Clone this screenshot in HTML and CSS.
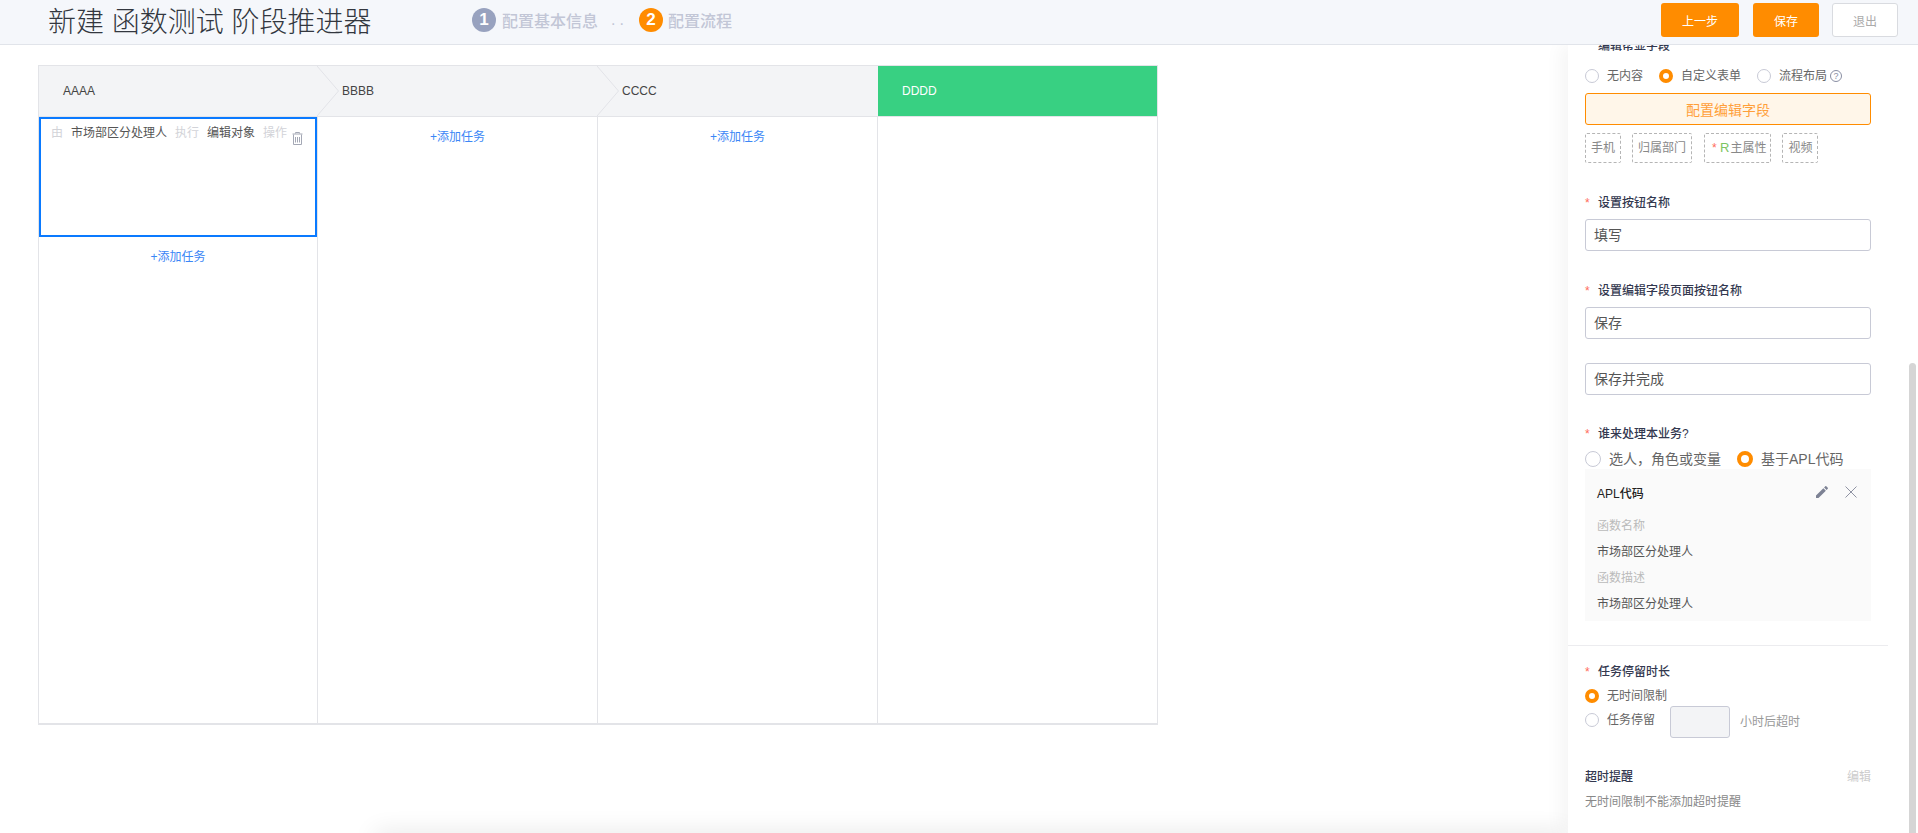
FILE: index.html
```html
<!DOCTYPE html>
<html lang="zh-CN">
<head>
    <meta charset="UTF-8">
    <meta name="viewport" content="width=device-width, initial-scale=1.0">
    <title>新建 函数测试 阶段推进器</title>
    <link rel="stylesheet" href="styles.css">
</head>
<body>
    <header class="topbar">
        <h1 class="page-title">新建 函数测试 阶段推进器</h1>
        <div class="steps">
            <span class="step-num">1</span>
            <span class="step-text">配置基本信息</span>
            <span class="step-dots">..</span>
            <span class="step-num step-num-on">2</span>
            <span class="step-text">配置流程</span>
        </div>
        <div class="top-actions">
            <button class="btn btn-primary btn-prev">上一步</button>
            <button class="btn btn-primary">保存</button>
            <button class="btn btn-plain">退出</button>
        </div>
    </header>

    <main class="workspace">
        <section class="board">
            <div class="column">
                <div class="col-head">
                    AAAA
                    <svg class="chevron" width="23" height="50" viewBox="0 0 23 50"><path d="M0 0 L21.5 25 L0 50" fill="#f3f4f6" stroke="#e2e3e8"/></svg>
                </div>
                <div class="col-body">
                    <div class="task-card">
                        <span class="muted">由</span>
                        <span>市场部区分处理人</span>
                        <span class="muted">执行</span>
                        <span>编辑对象</span>
                        <span class="muted">操作</span>
                        <svg class="trash" width="11" height="13" viewBox="0 0 11 13">
                            <path d="M3.5 1.5 V0.5 H7.5 V1.5 M0.5 2 H10.5 M1.5 2.5 V12.5 H9.5 V2.5" fill="none" stroke="#a4a8b5"/>
                            <path d="M3.5 5 V10.5 M5.5 5 V10.5 M7.5 5 V10.5" fill="none" stroke="#a4a8b5"/>
                        </svg>
                    </div>
                    <a class="add-task">+添加任务</a>
                </div>
            </div>
            <div class="column">
                <div class="col-head">
                    BBBB
                    <svg class="chevron" width="23" height="50" viewBox="0 0 23 50"><path d="M0 0 L21.5 25 L0 50" fill="#f3f4f6" stroke="#e2e3e8"/></svg>
                </div>
                <div class="col-body">
                    <a class="add-task">+添加任务</a>
                </div>
            </div>
            <div class="column">
                <div class="col-head">CCCC</div>
                <div class="col-body">
                    <a class="add-task">+添加任务</a>
                </div>
            </div>
            <div class="column column-last">
                <div class="col-head col-head-done">DDDD</div>
                <div class="col-body"></div>
            </div>
        </section>

        <aside class="panel">
            <div class="panel-label panel-label-cut">编辑帮显字段</div>

            <div class="radio-row radio-row-small">
                <label class="radio-item"><i class="radio"></i>无内容</label>
                <label class="radio-item"><i class="radio radio-on"></i>自定义表单</label>
                <label class="radio-item"><i class="radio"></i>流程布局<span class="help">?</span></label>
            </div>

            <button class="config-btn">配置编辑字段</button>

            <div class="tags">
                <span class="tag">手机</span>
                <span class="tag">归属部门</span>
                <span class="tag tag-main"><em class="req">*</em> <b class="tag-r">R</b>主属性</span>
                <span class="tag">视频</span>
            </div>

            <div class="panel-label panel-label-gap"><em class="req">*</em>设置按钮名称</div>
            <div class="text-input">填写</div>

            <div class="panel-label panel-label-gap"><em class="req">*</em>设置编辑字段页面按钮名称</div>
            <div class="text-input input-close">保存</div>
            <div class="text-input input-second">保存并完成</div>

            <div class="panel-label panel-label-who"><em class="req">*</em>谁来处理本业务?</div>
            <div class="radio-row radio-row-large">
                <label class="radio-item"><i class="radio"></i>选人，角色或变量</label>
                <label class="radio-item"><i class="radio radio-on"></i>基于APL代码</label>
            </div>

            <div class="apl-box">
                <div class="apl-head">
                    <strong>APL代码</strong>
                    <svg class="apl-icon apl-pencil" width="16" height="16" viewBox="0 0 24 24"><path d="M3 17.25V21h3.75L17.81 9.94l-3.75-3.75L3 17.25zM20.71 7.04c.39-.39.39-1.02 0-1.41l-2.34-2.34c-.39-.39-1.02-.39-1.41 0l-1.83 1.83 3.75 3.75 1.83-1.83z" fill="#7d8294"/></svg>
                    <svg class="apl-icon" width="12" height="12" viewBox="0 0 12 12"><path d="M0.5 0.5 L11.5 11.5 M11.5 0.5 L0.5 11.5" stroke="#8f93a3"/></svg>
                </div>
                <div class="apl-rows">
                    <div class="apl-key">函数名称</div>
                    <div class="apl-value">市场部区分处理人</div>
                    <div class="apl-key">函数描述</div>
                    <div class="apl-value">市场部区分处理人</div>
                </div>
            </div>

            <hr class="panel-line">

            <div class="panel-label panel-label-stay"><em class="req">*</em>任务停留时长</div>
            <label class="radio-item stay-first"><i class="radio radio-on"></i>无时间限制</label>
            <div class="stay-row">
                <label class="radio-item"><i class="radio"></i>任务停留</label>
                <div class="hours-input"></div>
                <span class="hours-text">小时后超时</span>
            </div>

            <div class="remind-head">
                <strong>超时提醒</strong>
                <span class="remind-edit">编辑</span>
            </div>
            <p class="remind-text">无时间限制不能添加超时提醒</p>

            <div class="scroll-thumb"></div>
        </aside>

        <div class="footer-shadow"></div>
    </main>
</body>
</html>
```

FILE: styles.css
```css
* {
    margin: 0;
    padding: 0;
    box-sizing: border-box;
}

body {
    font-family: "Liberation Sans", "Noto Sans CJK SC", sans-serif;
    background: #ffffff;
    color: #555555;
    font-size: 12px;
    height: 100vh;
    display: flex;
    flex-direction: column;
    overflow: hidden;
}

/* top bar */
.topbar {
    position: relative;
    z-index: 2;
    flex: none;
    height: 45px;
    padding: 0 20px 4px 48px;
    display: flex;
    align-items: center;
    background: #f5f7fb;
    border-bottom: 1px solid #e1e4ea;
}

.page-title {
    width: 424px;
    font-size: 28px;
    font-weight: 300;
    color: #33373f;
    white-space: pre;
}

.steps {
    display: flex;
    align-items: center;
    font-size: 16px;
    font-weight: 500;
    color: #c2c6d6;
}

.step-num {
    width: 24px;
    height: 24px;
    border-radius: 50%;
    background: #98a2bf;
    color: #ffffff;
    font-weight: bold;
    font-size: 17px;
    line-height: 24px;
    text-align: center;
    margin-right: 6px;
}

.step-num-on {
    margin-right: 5px;
    background: #ff8c00;
}

.step-dots {
    width: 41px;
    padding-left: 13px;
    font-weight: normal;
    letter-spacing: 4px;
}

.top-actions {
    margin-left: auto;
    display: flex;
    gap: 14px;
}

.btn {
    width: 66px;
    height: 34px;
    border-radius: 3px;
    font-family: inherit;
    font-size: 12px;
}

.btn-prev {
    width: 78px;
}

.btn-primary {
    background: #ff8c00;
    border: none;
    color: #ffffff;
}

.btn-plain {
    margin-left: -1px;
    background: #ffffff;
    border: 1px solid #d9dbe0;
    color: #aaaaaa;
}

/* board */
.workspace {
    position: relative;
    flex: 1;
    min-height: 0;
    display: flex;
}

.board {
    flex: none;
    align-self: flex-start;
    width: 1120px;
    height: 660px;
    margin: 20px 0 0 38px;
    display: grid;
    grid-template-columns: 279px 280px 280px 279px;
    border: 1px solid #e3e4e8;
    border-bottom-width: 2px;
}

.column {
    display: flex;
    flex-direction: column;
    border-right: 1px solid #e3e4e8;
}

.column-last {
    border-right: none;
}

.col-head {
    position: relative;
    flex: none;
    height: 51px;
    margin-right: -1px;
    padding: 0 0 1px 24px;
    display: flex;
    align-items: center;
    background: #f3f4f6;
    border-bottom: 1px solid #e3e4e8;
    color: #444444;
}

.col-head-done {
    margin-right: 0;
    background: #38d082;
    color: #ffffff;
}

.chevron {
    position: absolute;
    z-index: 1;
    top: 0;
    left: 100%;
    margin-left: -1px;
}

.col-body {
    flex: 1;
}

.task-card {
    height: 120px;
    margin-right: 0;
    padding: 6px 0 0 10px;
    display: flex;
    align-items: flex-start;
    gap: 8px;
    line-height: 16px;
    border: 2px solid #0a7aff;
    color: #555555;
}

.muted {
    color: #d2d3d8;
}

.trash {
    margin: 7px 0 0 -3px;
}

.add-task {
    display: block;
    margin-top: 12px;
    line-height: 16px;
    text-align: center;
    color: #3b86f6;
}

/* right panel */
.panel {
    position: relative;
    z-index: 1;
    flex: none;
    width: 350px;
    margin-left: auto;
    padding: 0 47px 0 17px;
    background: #ffffff;
    box-shadow: -8px 0 16px rgba(0, 0, 0, 0.04);
    overflow: hidden;
}

.panel-label {
    height: 16px;
    line-height: 18px;
    font-weight: 500;
    color: #33384f;
    white-space: nowrap;
}

.panel-label-cut {
    margin: -7px 0 0 13px;
    line-height: 16px;
}

.panel-label-gap {
    margin-top: 31px;
}

.panel-label-who {
    margin-top: 30px;
}

.panel-label-stay {
    margin-top: 17px;
}

.req {
    display: inline-block;
    width: 13px;
    font-style: normal;
    font-weight: normal;
    color: #ff6b5b;
}

.radio-row {
    display: flex;
    height: 16px;
}

.radio-row-small {
    margin-top: 14px;
    gap: 16px;
}

.radio-row-large {
    margin-top: 10px;
    gap: 16px;
    font-size: 14px;
    color: #666666;
}

.radio-row-large .radio {
    width: 16px;
    height: 16px;
}

.radio-item {
    display: flex;
    align-items: center;
    gap: 8px;
    height: 16px;
    line-height: 16px;
    white-space: nowrap;
    color: #666666;
}

.radio-row-large .radio-item {
    font-size: 14px;
}

.radio {
    flex: none;
    width: 14px;
    height: 14px;
    border: 1px solid #c8cad6;
    border-radius: 50%;
    background: #ffffff;
}

.radio-on {
    border: 4px solid #ff8c00;
}

.help {
    width: 12px;
    height: 12px;
    margin-left: -5px;
    border: 1px solid #8a8fa3;
    border-radius: 50%;
    font-size: 9px;
    line-height: 10px;
    text-align: center;
    color: #8a8fa3;
}

.config-btn {
    display: block;
    width: 100%;
    height: 32px;
    margin-top: 9px;
    background: #fff6e9;
    border: 1px solid #ff8c00;
    border-radius: 3px;
    font-family: inherit;
    font-size: 14px;
    color: #ff9f3a;
}

.tags {
    display: flex;
    gap: 11px;
    margin-top: 8px;
}

.tag {
    height: 30px;
    padding: 0 5px;
    line-height: 28px;
    border: 1px dashed #b5b5b5;
    border-radius: 2px;
    color: #888888;
    white-space: nowrap;
}

.tag-main {
    margin-left: 1px;
    padding: 0 4px 0 7px;
}

.tag .req {
    width: auto;
}

.tag-r {
    margin-right: 1px;
    font-size: 13px;
    font-weight: normal;
    color: #7cc463;
}

.text-input {
    height: 32px;
    margin-top: 9px;
    padding-left: 8px;
    line-height: 30px;
    font-size: 14px;
    border: 1px solid #c8cad6;
    border-radius: 3px;
    color: #555555;
}

.input-second {
    margin-top: 24px;
}

.apl-box {
    height: 152px;
    margin-top: 2px;
    padding: 15px 14px 0 12px;
    background: #fafafa;
}

.apl-head {
    display: flex;
    align-items: center;
    height: 16px;
    color: #222222;
}

.apl-head strong {
    flex: 1;
    font-weight: 500;
}

.apl-icon {
    margin-left: 16px;
}

.apl-pencil {
    margin-right: -1px;
}

.apl-rows {
    margin-top: 13px;
    line-height: 26px;
}

.apl-key {
    color: #bbbbbb;
}

.panel-line {
    width: 320px;
    height: 1px;
    margin: 24px 0 0 -17px;
    border: none;
    background: #ececef;
}

.stay-first {
    margin-top: 9px;
}

.stay-row {
    display: flex;
    align-items: center;
    margin-top: 2px;
}

.stay-row .radio-item {
    width: 85px;
    margin-bottom: 4px;
}

.hours-input {
    width: 60px;
    height: 32px;
    background: #f3f4f6;
    border: 1px solid #c8cad6;
    border-radius: 3px;
}

.hours-text {
    margin: 0 0 4px 10px;
    color: #999999;
}

.remind-head {
    display: flex;
    justify-content: space-between;
    height: 16px;
    line-height: 16px;
    margin-top: 31px;
}

.remind-head strong {
    font-weight: 500;
    color: #33384f;
}

.remind-edit {
    color: #cccccc;
}

.remind-text {
    margin-top: 9px;
    line-height: 16px;
    color: #888888;
}

.scroll-thumb {
    position: absolute;
    top: 318px;
    right: 2px;
    bottom: 0;
    width: 7px;
    border-radius: 4px 4px 0 0;
    background: #d5d5d5;
}

.footer-shadow {
    position: absolute;
    left: 375px;
    right: 350px;
    bottom: -14px;
    height: 14px;
    box-shadow: 0 0 24px rgba(0, 0, 0, 0.12);
}
```
